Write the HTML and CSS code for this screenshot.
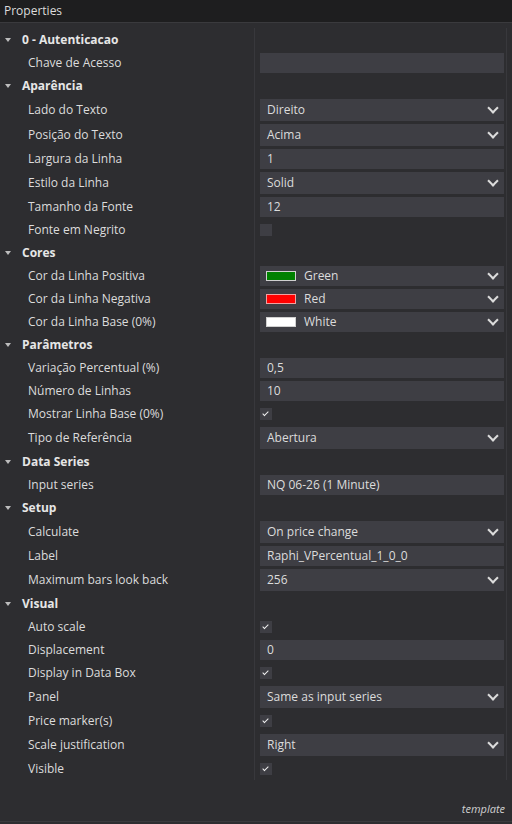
FILE: index.html
```html
<!DOCTYPE html>
<html>
<head>
<meta charset="utf-8">
<link rel="stylesheet" href="styles.css">
</head>
<body>
<div class="panel">
  <div class="header">Properties</div>
  <div class="list">
    <div class="row cat"><div class="name"><span class="tri"></span>0 - Autenticacao</div><div class="val"></div></div>
    <div class="row"><div class="name">Chave de Acesso</div><div class="val"><div class="box"></div></div></div>

    <div class="row cat"><div class="name"><span class="tri"></span>Aparência</div><div class="val"></div></div>
    <div class="row dd"><div class="name">Lado do Texto</div><div class="val"><div class="box"><span class="txt">Direito</span><span class="chev"></span></div></div></div>
    <div class="row dd"><div class="name">Posição do Texto</div><div class="val"><div class="box"><span class="txt">Acima</span><span class="chev"></span></div></div></div>
    <div class="row"><div class="name">Largura da Linha</div><div class="val"><div class="box"><span class="txt">1</span></div></div></div>
    <div class="row dd"><div class="name">Estilo da Linha</div><div class="val"><div class="box"><span class="txt">Solid</span><span class="chev"></span></div></div></div>
    <div class="row"><div class="name">Tamanho da Fonte</div><div class="val"><div class="box"><span class="txt">12</span></div></div></div>
    <div class="row"><div class="name">Fonte em Negrito</div><div class="val"><span class="check"></span></div></div>

    <div class="row cat"><div class="name"><span class="tri"></span>Cores</div><div class="val"></div></div>
    <div class="row"><div class="name">Cor da Linha Positiva</div><div class="val"><div class="box"><span class="swatch green"></span><span class="txt">Green</span><span class="chev"></span></div></div></div>
    <div class="row"><div class="name">Cor da Linha Negativa</div><div class="val"><div class="box"><span class="swatch red"></span><span class="txt">Red</span><span class="chev"></span></div></div></div>
    <div class="row"><div class="name">Cor da Linha Base (0%)</div><div class="val"><div class="box"><span class="swatch white"></span><span class="txt">White</span><span class="chev"></span></div></div></div>

    <div class="row cat"><div class="name"><span class="tri"></span>Parâmetros</div><div class="val"></div></div>
    <div class="row"><div class="name">Variação Percentual (%)</div><div class="val"><div class="box"><span class="txt">0,5</span></div></div></div>
    <div class="row"><div class="name">Número de Linhas</div><div class="val"><div class="box"><span class="txt">10</span></div></div></div>
    <div class="row"><div class="name">Mostrar Linha Base (0%)</div><div class="val"><span class="check on"></span></div></div>
    <div class="row dd"><div class="name">Tipo de Referência</div><div class="val"><div class="box"><span class="txt">Abertura</span><span class="chev"></span></div></div></div>

    <div class="row cat"><div class="name"><span class="tri"></span>Data Series</div><div class="val"></div></div>
    <div class="row"><div class="name">Input series</div><div class="val"><div class="box"><span class="txt">NQ 06-26 (1 Minute)</span></div></div></div>

    <div class="row cat"><div class="name"><span class="tri"></span>Setup</div><div class="val"></div></div>
    <div class="row dd"><div class="name">Calculate</div><div class="val"><div class="box"><span class="txt">On price change</span><span class="chev"></span></div></div></div>
    <div class="row"><div class="name">Label</div><div class="val"><div class="box"><span class="txt">Raphi_VPercentual_1_0_0</span></div></div></div>
    <div class="row dd"><div class="name">Maximum bars look back</div><div class="val"><div class="box"><span class="txt">256</span><span class="chev"></span></div></div></div>

    <div class="row cat"><div class="name"><span class="tri"></span>Visual</div><div class="val"></div></div>
    <div class="row"><div class="name">Auto scale</div><div class="val"><span class="check on"></span></div></div>
    <div class="row"><div class="name">Displacement</div><div class="val"><div class="box"><span class="txt">0</span></div></div></div>
    <div class="row"><div class="name">Display in Data Box</div><div class="val"><span class="check on"></span></div></div>
    <div class="row dd"><div class="name">Panel</div><div class="val"><div class="box"><span class="txt">Same as input series</span><span class="chev"></span></div></div></div>
    <div class="row"><div class="name">Price marker(s)</div><div class="val"><span class="check on"></span></div></div>
    <div class="row dd"><div class="name">Scale justification</div><div class="val"><div class="box"><span class="txt">Right</span><span class="chev"></span></div></div></div>
    <div class="row"><div class="name">Visible</div><div class="val"><span class="check on"></span></div></div>
  </div>
  <div class="footer"><span class="tpl">template</span></div>
</div>
</body>
</html>
```
FILE: styles.css
```css
html, body {
  margin: 0;
  padding: 0;
  background: #2d2d30;
}
body {
  width: 512px;
  height: 824px;
  overflow: hidden;
  font-family: "Open Sans", "Noto Sans", sans-serif;
  font-size: 12px;
  color: #dcdcdc;
}
.panel {
  width: 512px;
  height: 824px;
  display: flex;
  flex-direction: column;
  background: #2d2d30;
}
.header {
  height: 22px;
  line-height: 21px;
  padding-left: 4px;
  background: #1e1e1f;
  border-bottom: 1px solid #3a3a3d;
  color: #dcdcdc;
}
.list {
  padding-top: 5px;
  padding-right: 5px;
  display: flex;
  flex-direction: column;
}
.row {
  display: grid;
  grid-template-columns: 255px 1fr;
  height: 23px;
}
.row.dd {
  height: 25px;
}
.name {
  border-right: 1px solid #38383c;
  padding-left: 28px;
  display: flex;
  align-items: center;
  white-space: nowrap;
}
.cat .name {
  padding-left: 5px;
  font-weight: bold;
  color: #e6e6e6;
}
.tri {
  width: 0;
  height: 0;
  border-left: 3.5px solid transparent;
  border-right: 3.5px solid transparent;
  border-top: 4px solid #bdbdbd;
  margin-right: 11px;
  margin-top: 1px;
}
.val {
  border-right: 1px solid #38383c;
  padding: 0 2px 0 5px;
  display: flex;
  align-items: center;
}
.box {
  flex: 1;
  height: 20px;
  background: #3e3e44;
  display: flex;
  align-items: center;
  padding: 0 5px 0 7px;
  white-space: nowrap;
}
.dd .box {
  height: 22px;
}
.txt {
  flex: 1;
}
.chev {
  width: 6px;
  height: 6px;
  border-right: 2px solid #dcdcdc;
  border-bottom: 2px solid #dcdcdc;
  transform: rotate(45deg);
  margin-right: 2px;
  margin-top: -4px;
}
.swatch {
  width: 28px;
  height: 8px;
  border: 1px solid #d0d0d0;
  margin-right: 8px;
  margin-left: -1px;
}
.swatch.green { background: #008000; }
.swatch.red { background: #ff0000; border-color: #f0a0a0; }
.swatch.white { background: #ffffff; }
.check {
  width: 12px;
  height: 12px;
  background: #3e3e44;
  position: relative;
}
.check.on::after {
  content: "";
  position: absolute;
  left: 4px;
  top: 2px;
  width: 2px;
  height: 5px;
  border-right: 1.5px solid #f0f0f0;
  border-bottom: 1.5px solid #f0f0f0;
  transform: rotate(45deg);
}
.footer {
  flex: 1;
  display: flex;
  justify-content: flex-end;
  align-items: flex-end;
  padding: 0 7px 5px 0;
  border-bottom: 1px solid #3a3a3d;
  margin-bottom: 2px;
}
.tpl {
  font-style: italic;
  font-size: 11px;
  color: #d0d0d0;
}
```
